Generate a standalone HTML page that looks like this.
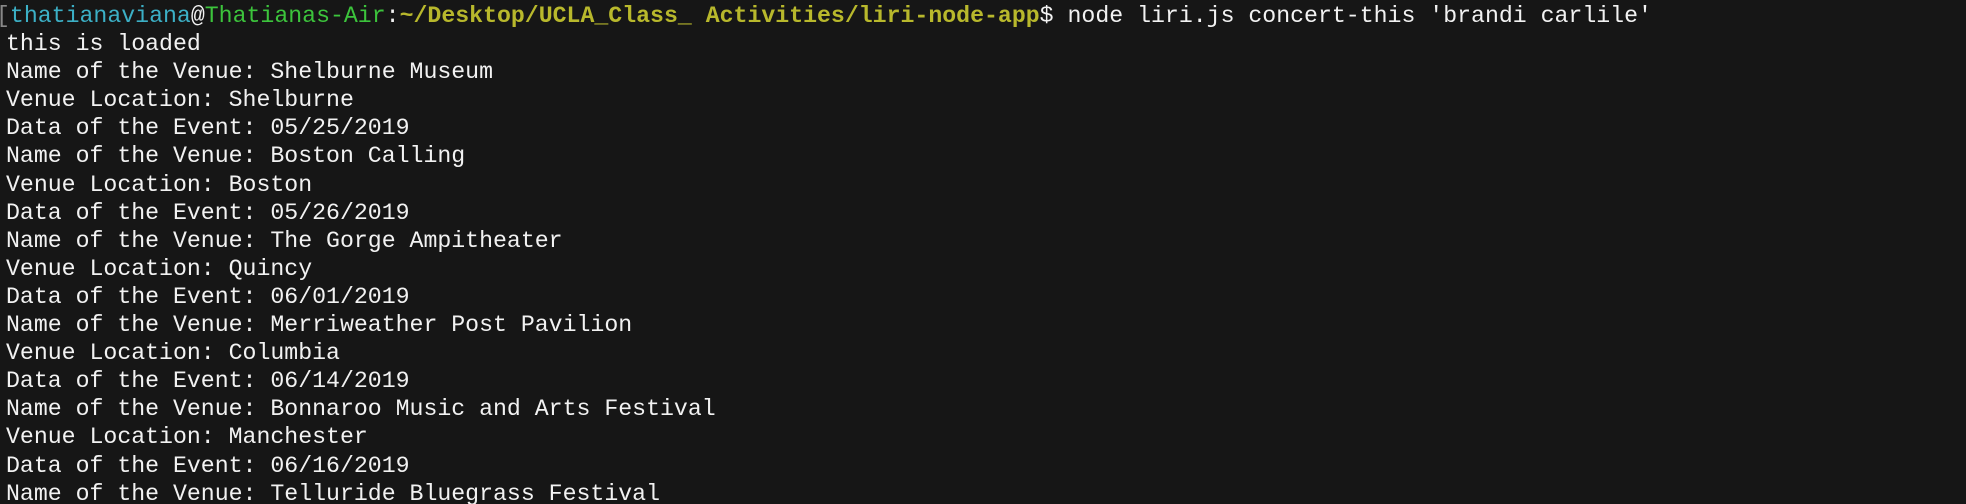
<!DOCTYPE html>
<html><head><meta charset="utf-8"><style>
html,body{margin:0;padding:0;background:#161616;width:1966px;height:504px;overflow:hidden}
pre{margin:0;padding:0 0 0 6px;font-family:"Liberation Mono",monospace;font-size:23.2px;line-height:28.1px;color:#f2f2f2;position:relative;top:2px}
.c{color:#3cb0c6}.g{color:#3cc43c}.y{color:#b8b82c;font-weight:bold}.b{color:#888}
</style></head><body><pre><span class="b" style="margin-left:-10px">[</span><span class="c">thatianaviana</span>@<span class="g">Thatianas-Air</span>:<span class="y">~/Desktop/UCLA_Class_ Activities/liri-node-app</span>$ node liri.js concert-this 'brandi carlile'
this is loaded
Name of the Venue: Shelburne Museum
Venue Location: Shelburne
Data of the Event: 05/25/2019
Name of the Venue: Boston Calling
Venue Location: Boston
Data of the Event: 05/26/2019
Name of the Venue: The Gorge Ampitheater
Venue Location: Quincy
Data of the Event: 06/01/2019
Name of the Venue: Merriweather Post Pavilion
Venue Location: Columbia
Data of the Event: 06/14/2019
Name of the Venue: Bonnaroo Music and Arts Festival
Venue Location: Manchester
Data of the Event: 06/16/2019
Name of the Venue: Telluride Bluegrass Festival</pre></body></html>
